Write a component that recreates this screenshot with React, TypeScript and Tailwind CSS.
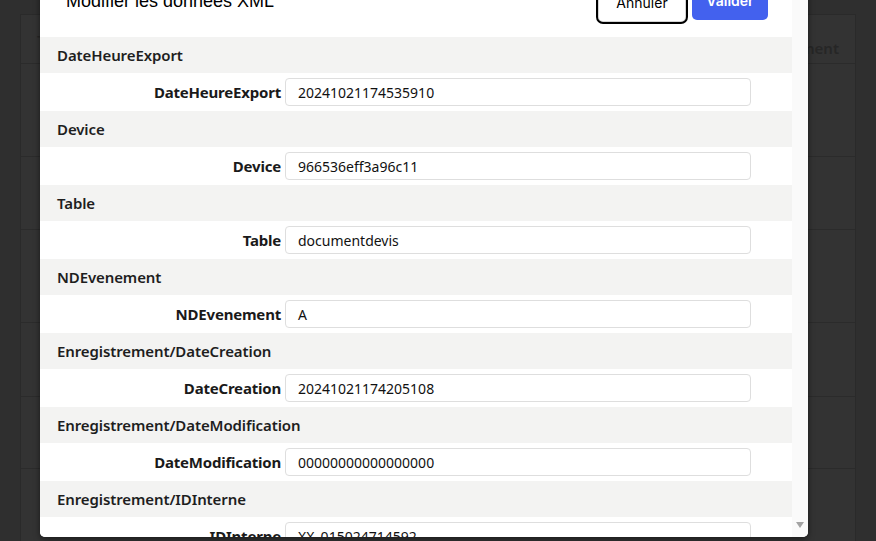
import React from 'react'

const sections = [
  { title: 'DateHeureExport', label: 'DateHeureExport', value: '20241021174535910' },
  { title: 'Device', label: 'Device', value: '966536eff3a96c11' },
  { title: 'Table', label: 'Table', value: 'documentdevis' },
  { title: 'NDEvenement', label: 'NDEvenement', value: 'A' },
  { title: 'Enregistrement/DateCreation', label: 'DateCreation', value: '20241021174205108' },
  { title: 'Enregistrement/DateModification', label: 'DateModification', value: '00000000000000000' },
  { title: 'Enregistrement/IDInterne', label: 'IDInterne', value: 'XX_015024714592' },
]

const bgRows = [93, 73, 93, 74, 72, 80]

function Background() {
  return (
    <div className="h-[541px] overflow-hidden bg-[#2f2f2f] px-[20px] pt-[14px]">
      <div className="border-x border-t border-[#2a2a2a] bg-[#333333]">
        <div className="flex h-[49px] items-end justify-between border-b border-[#2b2b2b] px-[16px] pb-[4px] text-[15px] font-semibold text-[#262626]">
          <span className="mb-[8px]">T</span>
          <span>Enregistrement</span>
        </div>
        {bgRows.map((h, i) => (
          <div key={i} className="border-b border-[#2b2b2b]" style={{ height: h }} />
        ))}
      </div>
    </div>
  )
}

function Field({ title, label, value }: { title: string; label: string; value: string }) {
  return (
    <div>
      <div className="flex h-[36px] items-center bg-[#f3f3f2] pl-[17px] text-[15px] font-semibold tracking-[-0.1px] text-[#1e1e1e]">
        {title}
      </div>
      <div className="flex h-[38px] items-center bg-white">
        <div className="w-[245px] pr-[4px] text-right text-[15px] font-bold tracking-[-0.2px] text-[#1a1a1a]">{label}</div>
        <div className="flex h-[28px] w-[466px] items-center rounded-[4px] border border-[#dedede] pl-[12px] text-[14px] text-[#111]">
          {value}
        </div>
      </div>
    </div>
  )
}

export default function App() {
  return (
    <div className="relative h-[541px] w-[876px] overflow-hidden" style={{ fontFamily: '"Noto Sans", "Open Sans", sans-serif' }}>
      <Background />
      <div className="absolute left-[40px] top-[-24px] flex h-[561px] w-[768px] overflow-hidden rounded-[5px] bg-white shadow-[0_2px_6px_rgba(0,0,0,0.5)]">
        <div className="flex-1 overflow-hidden">
          <div className="flex h-[61px] items-start justify-between pr-[24px]">
            <h2
              className="pl-[26px] pt-[11px] text-[18px] leading-[28px] text-black"
              style={{ fontFamily: '"Liberation Sans", Arial, sans-serif' }}
            >
              Modifier les données XML
            </h2>
            <div className="flex gap-[4px] pt-[4px]" style={{ fontFamily: 'Inter, sans-serif' }}>
              <button className="h-[44px] w-[92px] rounded-[7px] border-2 border-black bg-white text-[14px] text-black shadow-[inset_0_0_0_1px_#d4d4d4]">
                Annuler
              </button>
              <button className="h-[40px] w-[76px] rounded-[5px] bg-[#4361ee] text-[14px] font-semibold text-white">
                Valider
              </button>
            </div>
          </div>
          {sections.map(s => (
            <Field key={s.title} {...s} />
          ))}
        </div>
        <div className="flex w-[16px] flex-col justify-end bg-[#fafafa] pb-[8px]">
          <svg width="16" height="8" viewBox="0 0 16 8">
            <path d="M4 1h8l-4 6z" fill="#a3a3a3" />
          </svg>
        </div>
      </div>
    </div>
  )
}
